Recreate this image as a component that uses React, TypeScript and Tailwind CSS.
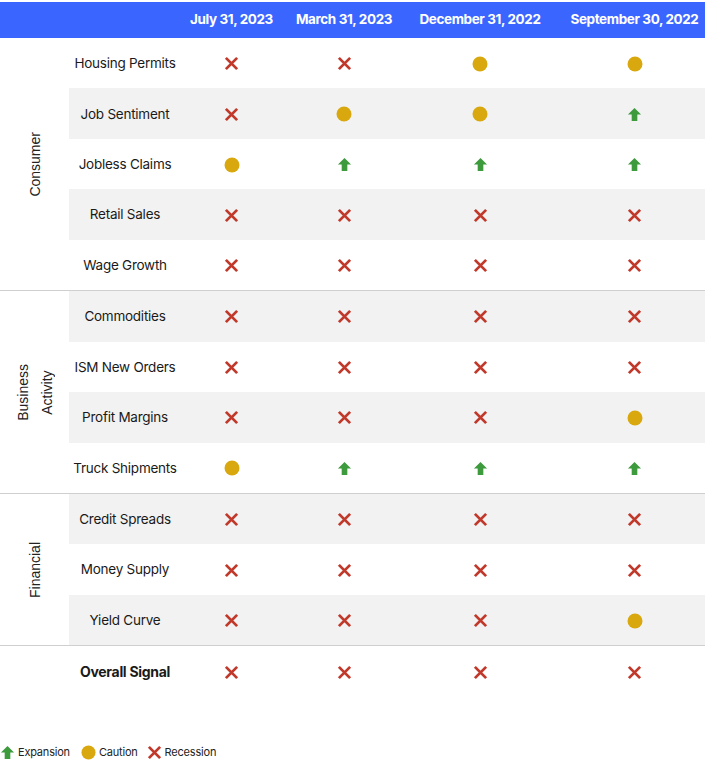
import React from "react";

type S = "x" | "c" | "u";

const XIcon = ({ size = 15 }: { size?: number }) => (
  <svg width={size} height={size} viewBox="0 0 16 16">
    <path d="M2 2 L14 14 M14 2 L2 14" stroke="#c0392b" strokeWidth="3" strokeLinecap="butt" />
  </svg>
);
const Circle = ({ size = 16 }: { size?: number }) => (
  <svg width={size} height={size} viewBox="0 0 16 16">
    <circle cx="8" cy="8" r="7.5" fill="#d8a80e" />
  </svg>
);
const Arrow = ({ size = 15 }: { size?: number }) => (
  <svg width={size} height={size} viewBox="0 0 16 16">
    <path d="M8 1 L15 8 L11 8 L11 15 L5 15 L5 8 L1 8 Z" fill="#3d9a3d" />
  </svg>
);

const Icon = ({ s }: { s: S }) => (s === "x" ? <XIcon /> : s === "c" ? <Circle /> : <Arrow />);

const groups: { label: string[]; rows: [string, S[]][] }[] = [
  {
    label: ["Consumer"],
    rows: [
      ["Housing Permits", ["x", "x", "c", "c"]],
      ["Job Sentiment", ["x", "c", "c", "u"]],
      ["Jobless Claims", ["c", "u", "u", "u"]],
      ["Retail Sales", ["x", "x", "x", "x"]],
      ["Wage Growth", ["x", "x", "x", "x"]],
    ],
  },
  {
    label: ["Business", "Activity"],
    rows: [
      ["Commodities", ["x", "x", "x", "x"]],
      ["ISM New Orders", ["x", "x", "x", "x"]],
      ["Profit Margins", ["x", "x", "x", "c"]],
      ["Truck Shipments", ["c", "u", "u", "u"]],
    ],
  },
  {
    label: ["Financial"],
    rows: [
      ["Credit Spreads", ["x", "x", "x", "x"]],
      ["Money Supply", ["x", "x", "x", "x"]],
      ["Yield Curve", ["x", "x", "x", "c"]],
    ],
  },
];

const cols = "grid grid-cols-[112px_101px_124px_148px_161px]";

export default function App() {
  let idx = 0;
  return (
    <div className="w-[705px] h-[761px] overflow-hidden bg-white text-[#1a1a1a]" style={{ fontFamily: "Inter, 'Noto Sans', sans-serif" }}>
      <div className="w-[715px]">
        <div className="mt-[2px] h-[36px] bg-[#3a66ff] flex items-center text-white font-bold text-[13.5px] tracking-[-0.4px] pb-[1px]">
          <div className="w-[181px]" />
          <div className="w-[101px] text-center">July 31, 2023</div>
          <div className="w-[124px] text-center">March 31, 2023</div>
          <div className="w-[148px] text-center">December 31, 2022</div>
          <div className="w-[161px] text-center">September 30, 2022</div>
        </div>
        {groups.map((g, gi) => (
          <div key={gi} className={`flex ${gi > 0 ? "border-t border-[#cfcfcf]" : ""}`}>
            <div className="w-[69px] flex items-center justify-center">
              <div
                className="[writing-mode:vertical-rl] rotate-180 text-center text-[14px] leading-[24px] text-[#222]"
                style={{ fontFamily: "'Liberation Sans', Arial, sans-serif" }}
              >
                {g.label.map((l, i) => (
                  <React.Fragment key={i}>
                    {l}
                    {i < g.label.length - 1 && <br />}
                  </React.Fragment>
                ))}
              </div>
            </div>
            <div className="flex flex-col">
              {g.rows.map(([name, vals]) => {
                idx++;
                const gray = idx % 2 === 0;
                return (
                  <div key={name} className={`${cols} h-[50.45px] items-center ${gray ? "bg-[#f2f2f2]" : ""}`}>
                    <div className="text-center text-[13.5px] tracking-[-0.25px]">{name}</div>
                    {vals.map((v, i) => (
                      <div key={i} className="flex justify-center pt-[1px]">
                        <Icon s={v} />
                      </div>
                    ))}
                  </div>
                );
              })}
            </div>
          </div>
        ))}
        <div className="flex border-t border-[#cfcfcf]">
          <div className="w-[69px]" />
          <div className={`${cols} h-[50.5px] items-center`}>
            <div className="text-center text-[14px] font-bold tracking-[-0.3px]">Overall Signal</div>
            {[0, 1, 2, 3].map((i) => (
              <div key={i} className="flex justify-center pt-[1px]">
                <XIcon />
              </div>
            ))}
          </div>
        </div>
        <div className="mt-[47px] flex items-center text-[11px] tracking-[-0.2px] text-[#222]">
          <Arrow size={15} />
          <span className="ml-[3px]">Expansion</span>
          <span className="ml-[11px]"><Circle size={15} /></span>
          <span className="ml-[3px]">Caution</span>
          <span className="ml-[9px]"><XIcon size={15} /></span>
          <span className="ml-[3px]">Recession</span>
        </div>
      </div>
    </div>
  );
}
